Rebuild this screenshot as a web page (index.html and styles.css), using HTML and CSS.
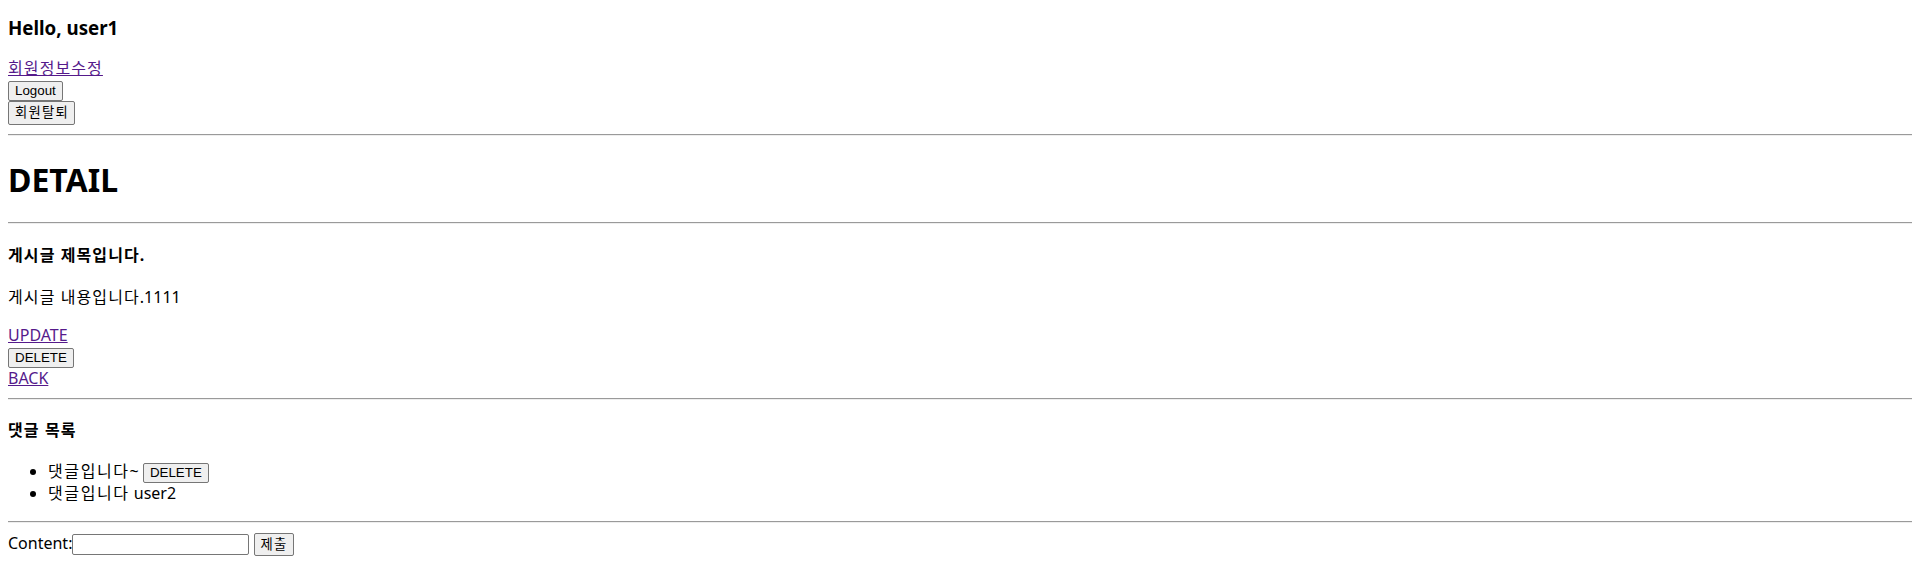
FILE: index.html
```html
<!DOCTYPE html>
<html lang="ko">
<head>
<meta charset="utf-8">
<title>DETAIL</title>
<link rel="stylesheet" href="styles.css">
</head>
<body>
<h3 class="greet">Hello, user1</h3>
<a class="link" href="#"><span class="ko">회원정보수정</span></a>
<form class="blk"><button class="btn" type="button">Logout</button></form>
<form class="blk"><button class="btn btn-ko" type="button"><span class="ko-sm">회원탈퇴</span></button></form>
<hr class="rule">
<h1 class="title">DETAIL</h1>
<hr class="rule">
<h4 class="subtitle subtitle-post"><span class="ko">게시글 제목입니다</span>.</h4>
<p class="content"><span class="ko">게시글 내용입니다</span>.1111</p>
<a class="link" href="#">UPDATE</a>
<form class="blk"><button class="btn" type="button">DELETE</button></form>
<a class="link" href="#">BACK</a>
<hr class="rule">
<h4 class="subtitle subtitle-list"><span class="ko">댓글 목록</span></h4>
<ul class="comments">
<li><span class="ko-li">댓글입니다</span>~ <form class="inl"><button class="btn" type="button">DELETE</button></form></li>
<li><span class="ko-li">댓글입니다</span> user2</li>
</ul>
<hr class="rule">
<form class="blk reply">Content:<input class="field" type="text"> <button class="btn btn-ko" type="button"><span class="ko-sm">제출</span></button></form>
</body>
</html>
```
FILE: styles.css
```css
html, body {
  background: #fff;
}
body {
  margin: 0 8px 8px;
  font-family: "Noto Sans", "Noto Sans CJK KR", sans-serif;
  font-size: 16px;
  line-height: 21px;
  color: #000;
}
.ko {
  letter-spacing: 1.1px;
}
.ko-li {
  letter-spacing: 1.6px;
}
.ko-sm {
  letter-spacing: 1.2px;
}
.greet {
  font-size: 18.72px;
  line-height: 25px;
  margin: 15px 0 18px;
  font-weight: bold;
}
.title {
  font-size: 32px;
  line-height: 42.5px;
  margin: 23.5px 0 20px;
  font-weight: bold;
}
.subtitle {
  font-size: 16px;
  margin: 21.3px 0 19.7px;
  font-weight: bold;
}
.subtitle-post {
  margin-bottom: 21.5px;
}
.subtitle-list {
  margin-top: 20px;
  margin-bottom: 19.5px;
}
.content {
  margin: 16px 0 17px;
}
.link {
  color: #551a8b;
  text-decoration: underline;
  display: inline-block;
}
.blk {
  margin: 0;
}
.reply {
  margin-top: 10px;
}
.inl {
  display: inline;
  margin: 0;
}
.rule {
  margin: 9px 0 8px;
  border: 0;
  border-top: 1px solid #9a9a9a;
  border-bottom: 1px solid #eeeeee;
  height: 0;
}
.btn {
  font-family: "Liberation Sans", "Noto Sans CJK KR", sans-serif;
  font-size: 13.33px;
  line-height: 16px;
  padding: 1px 6px;
  border: 1px solid #767676;
  border-radius: 2px;
  background: #efefef;
  color: #000;
  white-space: nowrap;
}
.btn-ko {
  line-height: 19.5px;
  padding-right: 5px;
}
.comments {
  margin: 0 0 17px;
  padding-left: 40px;
}
.field {
  font-family: "Liberation Sans", sans-serif;
  font-size: 13.33px;
  width: 177px;
  height: 21px;
  padding: 1px 2px;
  border: 1px solid #767676;
  border-radius: 2px;
  box-sizing: border-box;
  margin: 0;
}
```
